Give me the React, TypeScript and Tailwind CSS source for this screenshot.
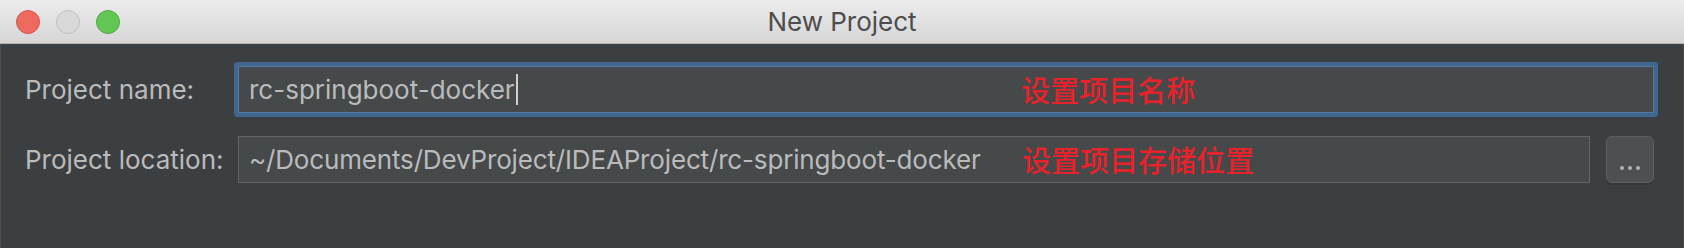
import React from "react";

const sans = { fontFamily: 'Inter, "Noto Sans", sans-serif' };
const cjk = { fontFamily: '"Noto Sans CJK SC", sans-serif' };

function Light({ bg, border }: { bg: string; border: string }) {
  return (
    <div
      className="h-[24px] w-[24px] rounded-full border"
      style={{ background: bg, borderColor: border }}
    />
  );
}

export default function App() {
  return (
    <div
      className="w-[1684px] h-[248px] overflow-hidden bg-[#3c3f41] flex flex-col"
      style={sans}
    >
      {/* Title bar */}
      <div className="relative h-[44px] shrink-0 bg-gradient-to-b from-[#ececec] to-[#d6d6d6] border-b border-[#b3b3b3] flex items-center">
        <div className="flex items-center gap-[16px] pl-[16px]">
          <Light bg="#ee6a5f" border="#d6574d" />
          <Light bg="#d9d9d9" border="#c0c0c0" />
          <Light bg="#62c654" border="#51a941" />
        </div>
        <div className="absolute inset-0 flex items-center justify-center text-[26px] text-[#4d4d4d] leading-none">
          New Project
        </div>
      </div>

      {/* Body */}
      <div className="flex-1 border-x border-[#4a4d4f] pt-[22px] pl-[24px] pr-[29px]">
        <div className="grid grid-cols-[213px_1fr] gap-y-[23px] items-center">
          <div className="text-[26px] text-[#bbbbbb] leading-none">Project name:</div>
          <div className="relative h-[47px] rounded-[1px] bg-[#45494a] border border-[#5679a0] ring-4 ring-[#3f6790] flex items-center pl-[10px] text-[26px] text-[#bbbbbb] leading-none">
            <span>rc-springboot-docker</span>
            <span className="inline-block w-[2px] h-[31px] bg-[#cfcfcf] ml-[1px]" />
            <span
              className="absolute left-[782px] top-[6px] text-[29px] leading-[32px] font-medium text-[#e8222b]"
              style={cjk}
            >
              设置项目名称
            </span>
          </div>

          <div className="text-[26px] text-[#bbbbbb] leading-none">Project location:</div>
          <div className="flex items-center gap-[16px]">
            <div className="relative flex-1 h-[47px] bg-[#45494a] border border-[#646464] flex items-center pl-[10px] text-[26px] text-[#bbbbbb] leading-none tracking-[-0.16px]">
              <span>~/Documents/DevProject/IDEAProject/rc-springboot-docker</span>
              <span
                className="absolute left-[783px] top-[6px] text-[29px] leading-[32px] font-medium tracking-normal text-[#e8222b]"
                style={cjk}
              >
                设置项目存储位置
              </span>
            </div>
            <div className="w-[48px] h-[47px] rounded-[6px] bg-[#4c5052] border border-[#5e6162] shadow-[0_2px_0_#343638] flex items-end justify-center gap-[4px] pb-[12px]">
              <span className="w-[4px] h-[4px] rounded-full bg-[#b4b4b4]" />
              <span className="w-[4px] h-[4px] rounded-full bg-[#b4b4b4]" />
              <span className="w-[4px] h-[4px] rounded-full bg-[#b4b4b4]" />
            </div>
          </div>
        </div>
      </div>
    </div>
  );
}
